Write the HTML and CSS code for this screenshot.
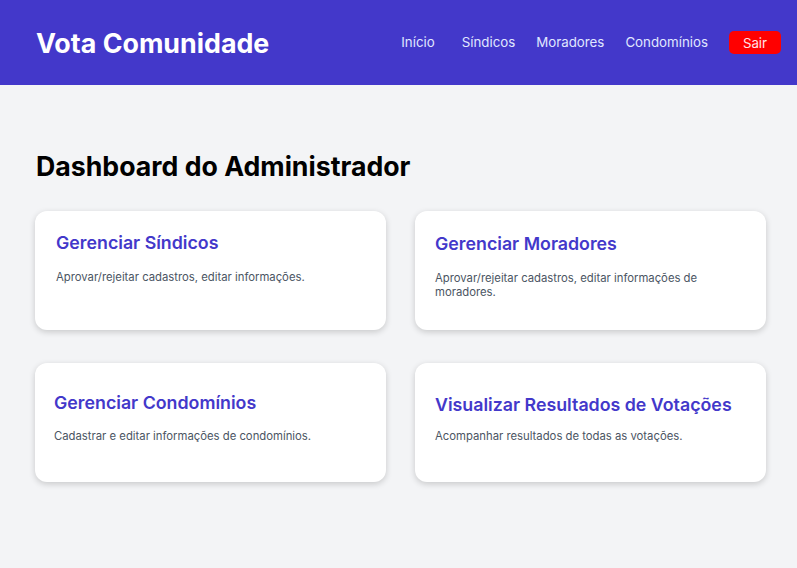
FILE: index.html
```html
<!DOCTYPE html>
<html lang="pt-BR">
<head>
<meta charset="utf-8">
<title>Vota Comunidade</title>
<link rel="stylesheet" href="styles.css">
</head>
<body>
<header class="topbar">
  <div class="brand">Vota Comunidade</div>
  <nav class="nav">
    <a class="nav-link nav-link--first" href="#">Início</a>
    <a class="nav-link" href="#">Síndicos</a>
    <a class="nav-link" href="#">Moradores</a>
    <a class="nav-link" href="#">Condomínios</a>
    <a class="logout" href="#">Sair</a>
  </nav>
</header>
<main class="main">
  <h1 class="page-title">Dashboard do Administrador</h1>
  <section class="grid">
    <div class="card card--a">
      <h2 class="card-title">Gerenciar Síndicos</h2>
      <p class="card-text">Aprovar/rejeitar cadastros, editar informações.</p>
    </div>
    <div class="card card--b">
      <h2 class="card-title">Gerenciar Moradores</h2>
      <p class="card-text">Aprovar/rejeitar cadastros, editar informações de moradores.</p>
    </div>
    <div class="card card--c">
      <h2 class="card-title">Gerenciar Condomínios</h2>
      <p class="card-text">Cadastrar e editar informações de condomínios.</p>
    </div>
    <div class="card card--d">
      <h2 class="card-title">Visualizar Resultados de Votações</h2>
      <p class="card-text">Acompanhar resultados de todas as votações.</p>
    </div>
  </section>
</main>
</body>
</html>
```
FILE: styles.css
```css
* { box-sizing: border-box; }
html, body { margin: 0; padding: 0; }
body {
  font-family: Inter, "Noto Sans", sans-serif;
  background: #f3f4f6;
  color: #000;
  height: 568px;
}
.topbar {
  height: 85px;
  background: #4338ca;
  display: flex;
  align-items: center;
  justify-content: space-between;
  padding: 0 16px 0 36px;
}
.brand {
  color: #fff;
  font-weight: 700;
  font-size: 26.8px;
}
.nav {
  display: flex;
  align-items: center;
  gap: 21px;
}
.nav-link {
  color: #e0e7ff;
  text-decoration: none;
  font-size: 13.3px;
  margin-top: -1px;
}
.nav-link--first { margin-right: 6px; }
.logout {
  background: #ff0000;
  color: #ffe4e6;
  text-decoration: none;
  font-size: 13.3px;
  width: 52px;
  height: 23px;
  border-radius: 5px;
  display: flex;
  align-items: center;
  justify-content: center;
}
.main {
  padding: 66px 31px 0 35px;
}
.page-title {
  margin: 0 0 30px 1px;
  font-size: 26.7px;
  font-weight: 700;
  line-height: 30px;
}
.grid {
  display: grid;
  grid-template-columns: 351px 351px;
  column-gap: 29px;
  row-gap: 33px;
}
.card {
  background: #fff;
  border-radius: 12px;
  height: 119px;
  box-shadow: 0 2px 6px rgba(0,0,0,0.18);
  padding: 20px 20px;
}
.card--a { padding-top: 21px; padding-left: 21px; }
.card--b { padding-top: 22px; }
.card--c { padding: 29px 19px; }
.card--d { padding: 31px 20px; }
.card-title {
  margin: 0;
  color: #4338ca;
  font-size: 17.8px;
  font-weight: 600;
  line-height: 22px;
}
.card-text {
  margin: 16px 0 0;
  color: #4b5563;
  font-size: 11.3px;
  line-height: 14px;
}
.card--c .card-text { margin-top: 15px; }
.card--d .card-text { margin-top: 13px; }
```
